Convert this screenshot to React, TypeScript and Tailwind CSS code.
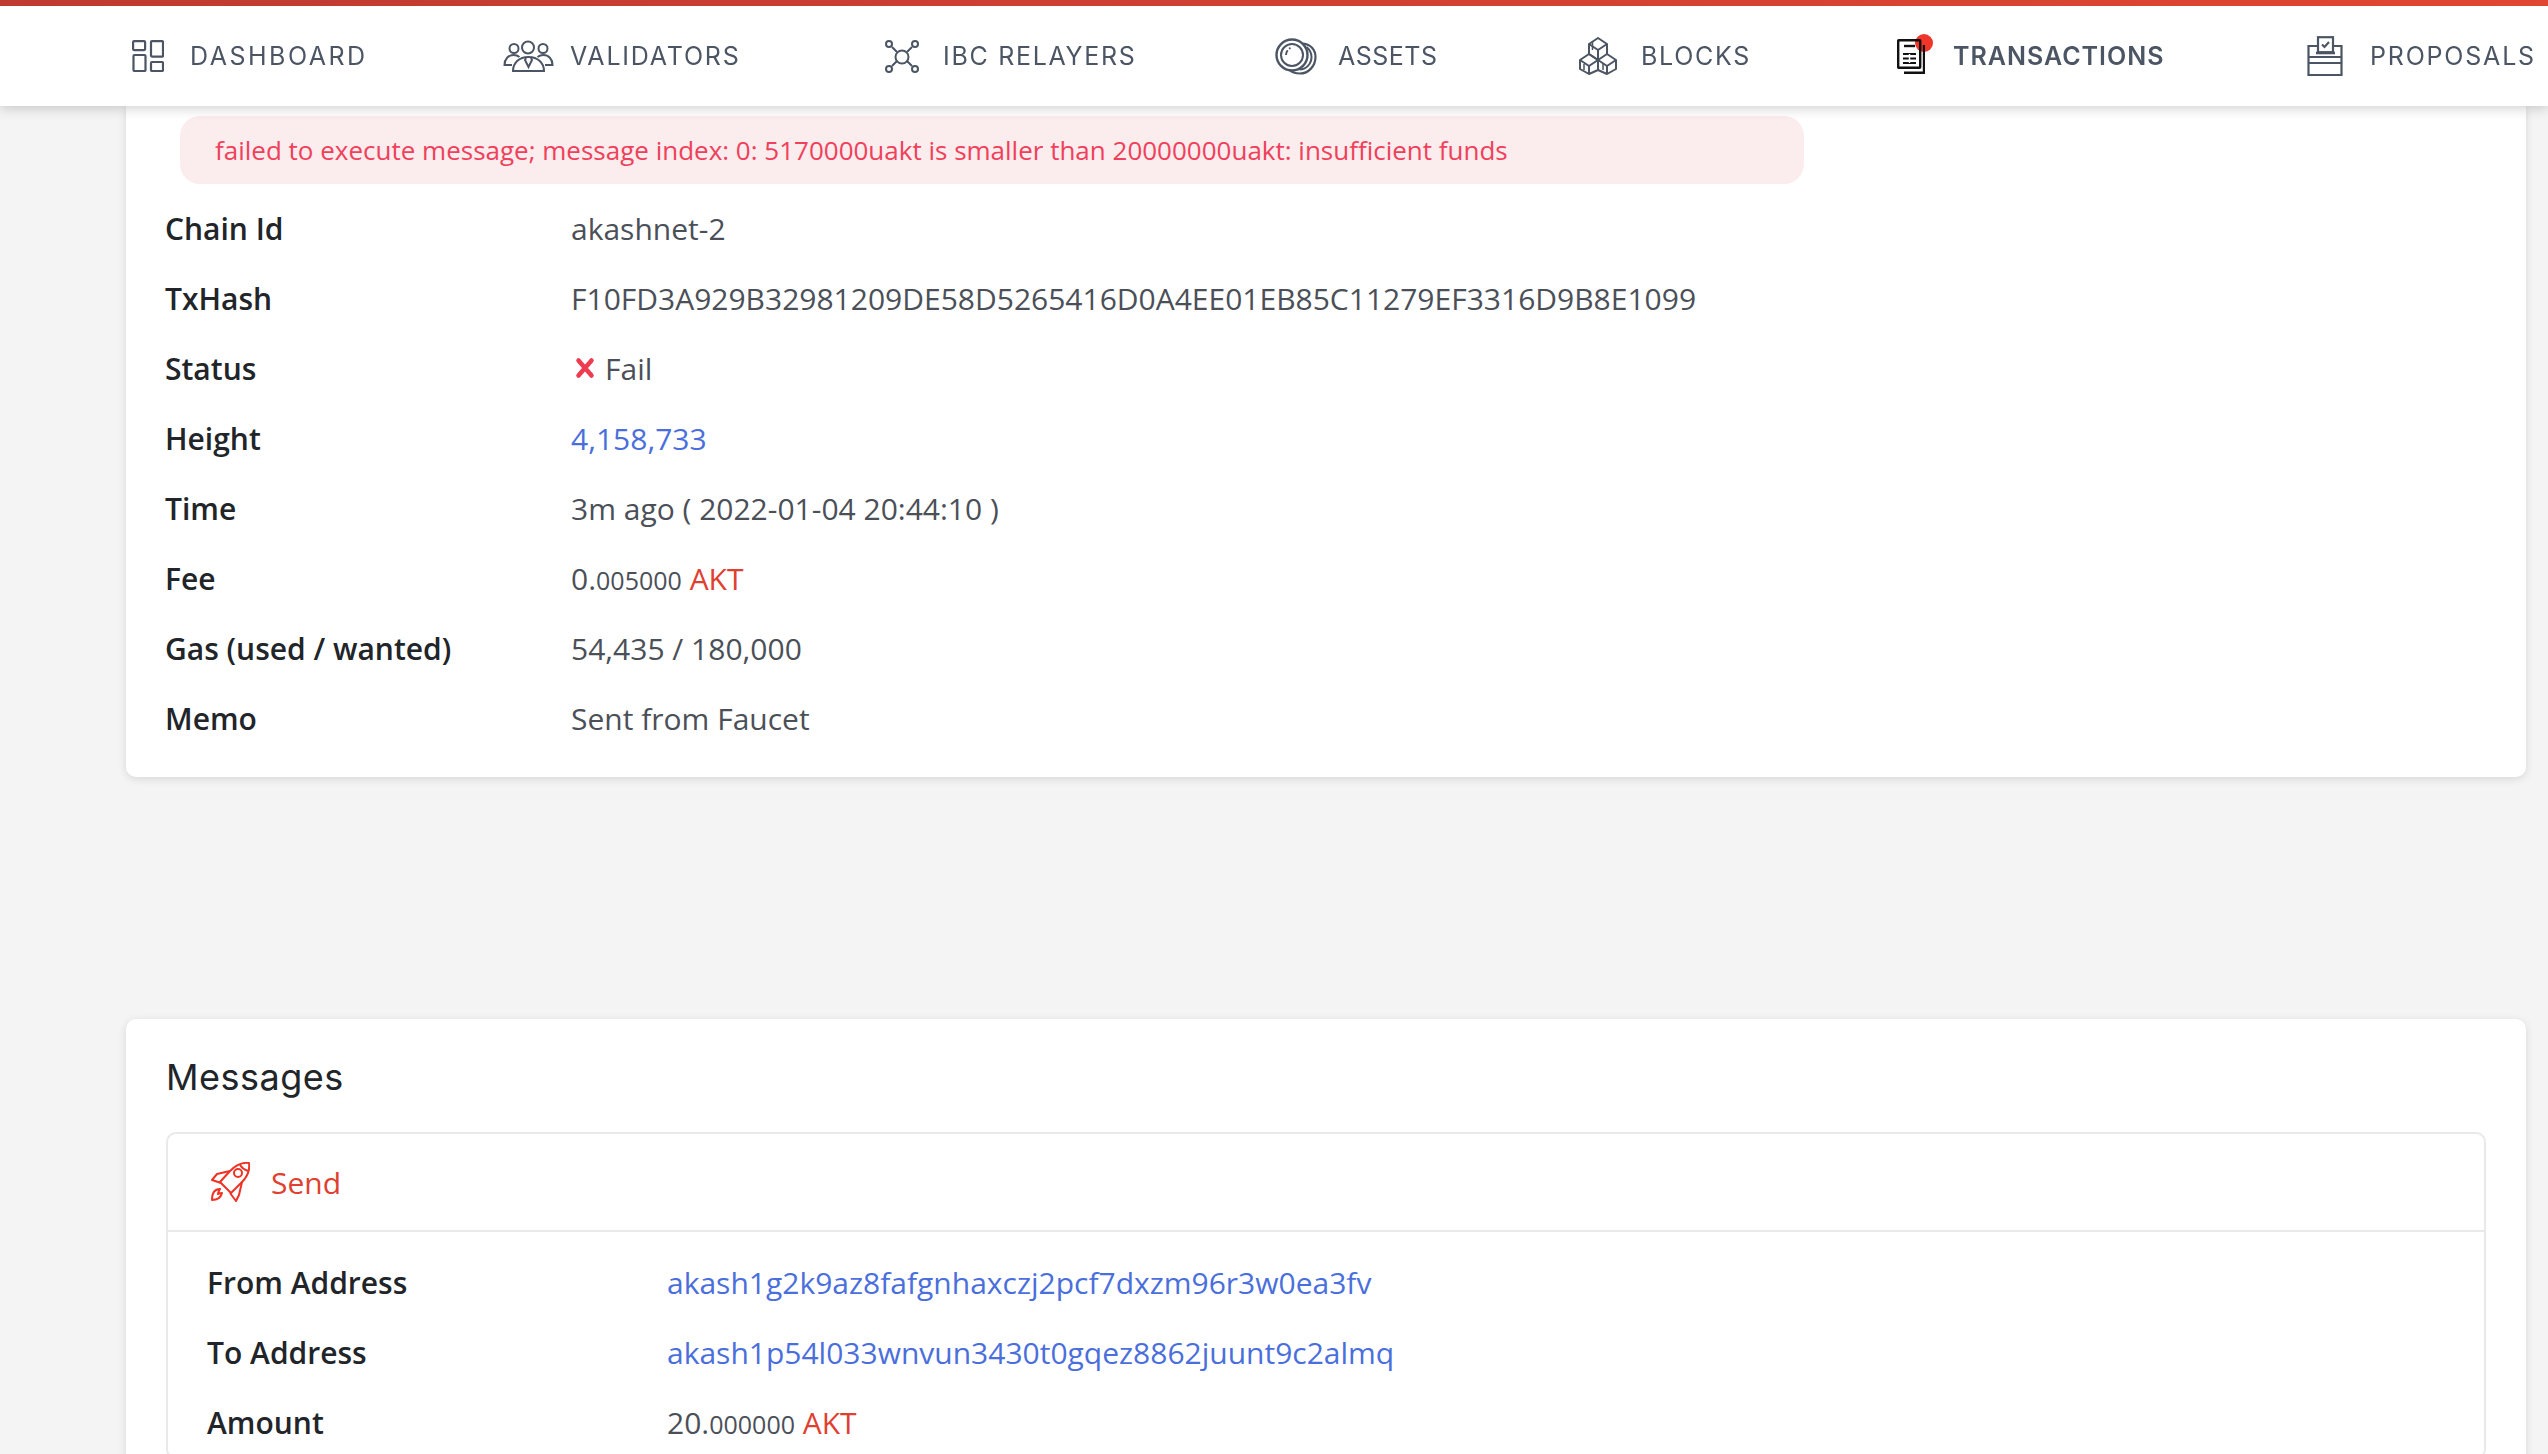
const NavIcon = ({ name }: { name: string }) => {
  if (name === 'dashboard') {
    return (
      <svg width="32" height="32" viewBox="0 0 32 32" fill="none" stroke="#4b5563" strokeWidth="2.2">
        <rect x="1.100" y="1.100" width="12" height="9" rx="1" />
        <rect x="19" y="1.100" width="12" height="15.500" rx="1" />
        <rect x="1.500" y="15" width="12" height="16" rx="1" />
        <rect x="19" y="22" width="12" height="9" rx="1" />
      </svg>
    )
  }
  if (name === 'validators') {
    return (
      <svg width="51" height="32" viewBox="0 0 51 32" fill="none" stroke="#4b5563" strokeWidth="2">
        <circle cx="25" cy="7.500" r="6" />
        <circle cx="11" cy="8.500" r="4.500" />
        <circle cx="40" cy="8.500" r="4.500" />
        <path d="M9 25H1.500c0-6 4-10 9-10 2.500 0 4.500.8 6 2" />
        <path d="M42 25h7.500c0-6-4-10-9-10-2.500 0-4.500.8-6 2" />
        <path d="M10 31c0-8 6-14 15.500-14S41 23 41 31z" />
        <path d="M23 18l-1 2 3.500 7 3.500-7-1-2" />
      </svg>
    )
  }
  if (name === 'ibc') {
    return (
      <svg width="34" height="33" viewBox="0 0 34 33" fill="none" stroke="#4b5563" strokeWidth="2">
        <circle cx="17" cy="17" r="6.500" />
        <circle cx="4" cy="4" r="3" />
        <circle cx="30" cy="4" r="3" />
        <circle cx="4" cy="29" r="3" />
        <circle cx="30" cy="29" r="3" />
        <path d="M7 7l5 5M27 7l-5 5M7 26l5-5M27 26l-5-5" />
      </svg>
    )
  }
  if (name === 'assets') {
    return (
      <svg width="42" height="37" viewBox="0 0 42 37" fill="none" stroke="#4b5563" strokeWidth="2">
        <circle cx="17" cy="17" r="15.500" strokeWidth="2.400" />
        <circle cx="17" cy="17" r="11" strokeWidth="2" />
        <path d="M28 5.500c8 1 12.500 6.500 12.500 13.500 0 9-7 16.500-15.500 16.500-5 0-9-2-11-4" strokeWidth="2.200" />
        <path d="M31.500 9c3 2.500 5 6 5 10 0 7-5.500 12.500-12 12.500" />
        <path d="M11 17c0-3 2-6 4.500-7" strokeDasharray="5 2" />
      </svg>
    )
  }
  if (name === 'blocks') {
    return (
      <svg width="38" height="38" viewBox="0 0 38 38" fill="none" stroke="#4b5563" strokeWidth="2" strokeLinejoin="round">
        <path d="M19 1l9 6v10l-9 6-9-6V7z" />
        <path d="M10 7l9 6 9-6M19 13v10" />
        <path d="M10 17l9 6v10l-9 4-9-5V23z" />
        <path d="M1 23l9 6 9-6M10 29v8" />
        <path d="M28 17l9 6v9l-9 5-9-4" />
        <path d="M19 23l9 6 9-6M28 29v8" />
        <path d="M13.500 5v8M5 27v6M24 27v6" strokeWidth="1.500" />
      </svg>
    )
  }
  if (name === 'transactions') {
    return (
      <div className="relative h-[35px] w-[28px]">
        <svg width="28" height="35" viewBox="0 0 28 35" fill="none" stroke="#111" strokeWidth="2.400">
          <rect x="1.200" y="1.200" width="22" height="27.500" rx="0.500" />
          <path d="M7 33.800h20V6" />
          <path d="M7 7h11" />
          <path d="M6 15h13M6 19.500h13M6 24h13" strokeWidth="2" />
          <path d="M12.500 15v9" stroke="#fff" strokeWidth="1.500" />
        </svg>
        <span className="absolute -top-[5px] left-[18px] h-[18px] w-[18px] rounded-full bg-[#f0352b] mix-blend-multiply" />
      </div>
    )
  }
  return (
    <svg width="36" height="40" viewBox="0 0 36 40" fill="none" stroke="#4b5563" strokeWidth="2.200">
      <path d="M10 10H1.500v29h33V10H27" />
      <rect x="11" y="1.200" width="15" height="15" />
      <path d="M9 17h19" strokeWidth="2.600" />
      <path d="M1.500 21h33M1.500 27h33" />
      <path d="M15 8.500l2.500 2.500 4.500-5" strokeWidth="2.200" />
    </svg>
  )
}

const navItems = [
  { name: 'dashboard', label: 'DASHBOARD', width: 'w-[371px]', iconBox: 'w-[58px]', tracking: 'tracking-[2.5px]' },
  { name: 'validators', label: 'VALIDATORS', width: 'w-[382px]', iconBox: 'w-[67px]', tracking: 'tracking-[1.8px]' },
  { name: 'ibc', label: 'IBC RELAYERS', width: 'w-[390px]', iconBox: 'w-[58px]', tracking: 'tracking-[1.7px]' },
  { name: 'assets', label: 'ASSETS', width: 'w-[304px]', iconBox: 'w-[63px]', tracking: 'tracking-[0.5px]' },
  { name: 'blocks', label: 'BLOCKS', width: 'w-[318px]', iconBox: 'w-[62px]', tracking: 'tracking-[1.7px]' },
  { name: 'transactions', label: 'TRANSACTIONS', width: 'w-[410px]', iconBox: 'w-[56px]', tracking: 'tracking-[1px]' },
  { name: 'proposals', label: 'PROPOSALS', width: 'w-[241px]', iconBox: 'w-[63px]', tracking: 'tracking-[1.8px]' },
]

const txRows = [
  { label: 'Chain Id', value: 'akashnet-2' },
  { label: 'TxHash', value: 'F10FD3A929B32981209DE58D5265416D0A4EE01EB85C11279EF3316D9B8E1099' },
  { label: 'Gas (used / wanted)', value: '54,435 / 180,000' },
  { label: 'Memo', value: 'Sent from Faucet' },
]

const Row = ({ label, children, labelWidth }: { label: string; children: React.ReactNode; labelWidth: string }) => (
  <div className="flex h-[70px] items-center text-[30px]">
    <div className={`${labelWidth} font-semibold text-[#212529]`}>{label}</div>
    <div className="text-[#4b5058]">{children}</div>
  </div>
)

const Amount = ({ whole, decimals }: { whole: string; decimals: string }) => (
  <span>
    {whole}.<span className="text-[25px]">{decimals}</span> <span className="text-[#e0402f]">AKT</span>
  </span>
)

export default function App() {
  return (
    <div className="h-[1454px] overflow-hidden bg-[#f4f4f4] font-['Open_Sans',sans-serif]">
      {/* top bar */}
      <header className="relative z-10 h-[106px] bg-white shadow-[0_2px_12px_rgba(0,0,0,0.2)]">
        <div className="h-[6px] bg-gradient-to-r from-[#bf3a30] to-[#e04632]" />
        <nav className="flex h-[100px] items-center pl-[132px] font-['Inter',sans-serif] text-[25px] text-[#4b5563]">
          {navItems.map((item) => (
            <div key={item.name} className={`flex shrink-0 items-center ${item.width}`}>
              <div className={item.iconBox}>
                <NavIcon name={item.name} />
              </div>
              <span className={`mt-[2px] ${item.tracking} ${item.name === 'transactions' ? 'font-semibold' : ''}`}>{item.label}</span>
            </div>
          ))}
        </nav>
      </header>

      <main className="mx-[126px] w-[2400px]">
        <section className="rounded-b-[10px] bg-white px-[39px] pt-[10px] pb-[24px] shadow-[0_2px_8px_rgba(0,0,0,0.12)]">
          <div className="ml-[15px] flex h-[68px] w-[1624px] items-center rounded-[20px] bg-[#fbecee] px-[35px] text-[26px] text-[#f0405a]">
            failed to execute message; message index: 0: 5170000uakt is smaller than 20000000uakt: insufficient funds
          </div>
          <div className="mt-[9px]">
            <Row label={txRows[0].label} labelWidth="w-[406px]">{txRows[0].value}</Row>
            <Row label={txRows[1].label} labelWidth="w-[406px]">{txRows[1].value}</Row>
            <Row label="Status" labelWidth="w-[406px]">
              <span className="flex items-center gap-[9px]">
                <svg width="22" height="22" viewBox="0 0 22 22" className="ml-[3px]" stroke="#ee3b50" strokeWidth="4.500" strokeLinecap="round">
                  <path d="M4.500 3.500l13 15M17.500 3.500l-13 15" />
                </svg>
                Fail
              </span>
            </Row>
            <Row label="Height" labelWidth="w-[406px]">
              <span className="text-[#4a6fdc]">4,158,733</span>
            </Row>
            <Row label="Time" labelWidth="w-[406px]">3m ago ( 2022-01-04 20:44:10 )</Row>
            <Row label="Fee" labelWidth="w-[406px]">
              <Amount whole="0" decimals="005000" />
            </Row>
            <Row label={txRows[2].label} labelWidth="w-[406px]">{txRows[2].value}</Row>
            <Row label={txRows[3].label} labelWidth="w-[406px]">{txRows[3].value}</Row>
          </div>
        </section>

        <section className="mt-[242px] rounded-[10px] bg-white px-[40px] pt-[36px] pb-[40px] shadow-[0_2px_8px_rgba(0,0,0,0.12)]">
          <h2 className="font-['Inter',sans-serif] text-[36px] leading-[44px] tracking-[0.5px] text-[#212529]">Messages</h2>
          <div className="mt-[33px] rounded-[10px] border-2 border-[#e9e9e9]">
            <div className="flex h-[98px] items-center gap-[21px] border-b-2 border-[#e9e9e9] pl-[43px] text-[30px] text-[#e0402f]">
              <svg width="39" height="40" viewBox="0 0 39 40" fill="none" stroke="#ee3326" strokeWidth="2" strokeLinejoin="round">
                <path d="M38 1C31 0 24 4 19 9L9 20l11 11 11-11c5-5 8-12 7-19z" />
                <path d="M29 3c2 3 5 5 8 6" />
                <circle cx="27" cy="11" r="4" />
                <path d="M19 9L6 12l-5 6 9 3" />
                <path d="M31 20l-3 13-3 6-6-8" />
                <path d="M9 27c-5 0-8 4-8 11 6 0 9-3 10-7-2 0-3 .5-4 1 0-2 1-3 2-5z" />
              </svg>
              Send
            </div>
            <div className="px-[39px] pt-[15px]">
              <Row label="From Address" labelWidth="w-[460px]">
                <span className="text-[#4a6fdc]">akash1g2k9az8fafgnhaxczj2pcf7dxzm96r3w0ea3fv</span>
              </Row>
              <Row label="To Address" labelWidth="w-[460px]">
                <span className="text-[#4a6fdc]">akash1p54l033wnvun3430t0gqez8862juunt9c2almq</span>
              </Row>
              <Row label="Amount" labelWidth="w-[460px]">
                <Amount whole="20" decimals="000000" />
              </Row>
            </div>
          </div>
        </section>
      </main>
    </div>
  )
}
